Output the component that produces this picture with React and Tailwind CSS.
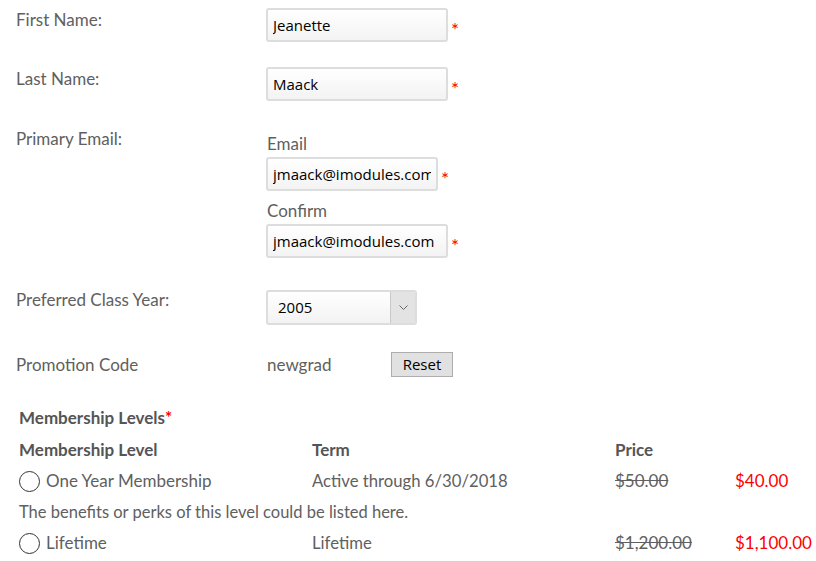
import { useState } from "react";

const inputCls =
  "h-[34px] rounded-[3px] border-2 border-[#dddddd] bg-gradient-to-b from-white to-[#f3f3f3] px-[5px] font-['Open_Sans',sans-serif] text-[15px] text-black outline-none";

const Req = () => (
  <span className="ml-[3px] mt-[12px] text-[19px] leading-none text-[#ff0000]">*</span>
);

const Label = ({ children }) => (
  <div className="w-[250px] shrink-0 leading-6">{children}</div>
);

export default function App() {
  const [first, setFirst] = useState("Jeanette");
  const [last, setLast] = useState("Maack");
  const [email, setEmail] = useState("jmaack@imodules.com");
  const [confirm, setConfirm] = useState("jmaack@imodules.com");
  const [level, setLevel] = useState("");

  return (
    <div className="min-h-screen bg-white pl-4 pt-[8px] font-['Lato',sans-serif] text-[17px] text-[#606060]">
      {/* First name */}
      <div className="flex">
        <Label>First Name:</Label>
        <div className="flex items-start">
          <input className={`${inputCls} w-[182px]`} value={first} onChange={(e) => setFirst(e.target.value)} />
          <Req />
        </div>
      </div>

      {/* Last name */}
      <div className="mt-[25px] flex">
        <Label>Last Name:</Label>
        <div className="flex items-start">
          <input className={`${inputCls} w-[182px]`} value={last} onChange={(e) => setLast(e.target.value)} />
          <Req />
        </div>
      </div>

      {/* Email */}
      <div className="mt-[26px] flex">
        <Label>Primary Email:</Label>
        <div className="pt-[5px]">
          <div className="pl-[1px] leading-6">Email</div>
          <div className="mt-[1px] flex items-start">
            <input className={`${inputCls} w-[172px]`} value={email} onChange={(e) => setEmail(e.target.value)} />
            <Req />
          </div>
          <div className="mt-[8px] pl-[1px] leading-6">Confirm</div>
          <div className="mt-[1px] flex items-start">
            <input className={`${inputCls} w-[182px]`} value={confirm} onChange={(e) => setConfirm(e.target.value)} />
            <Req />
          </div>
        </div>
      </div>

      {/* Class year */}
      <div className="mt-[30px] flex">
        <Label>Preferred Class Year:</Label>
        <div className="mt-[2px] flex h-[35px] w-[151px] overflow-hidden rounded-[3px] border-2 border-[#dddddd] bg-gradient-to-b from-white to-[#f3f3f3]">
          <div className="flex flex-1 items-center pl-[10px] font-['Open_Sans',sans-serif] text-[15px] text-black">2005</div>
          <div className="flex w-[25px] items-center justify-center border-l border-[#c8c8c8] bg-[#e3e3e3]">
            <svg width="9" height="5" viewBox="0 0 9 5">
              <path d="M0.5 0.5 L4.5 4.5 L8.5 0.5" fill="none" stroke="#666" strokeWidth="1" />
            </svg>
          </div>
        </div>
      </div>

      {/* Promotion code */}
      <div className="mt-[27px] flex items-center">
        <Label>Promotion Code</Label>
        <div className="w-[125px] pl-[1px] leading-6">newgrad</div>
        <button className="h-[25px] w-[62px] border border-[#adadad] bg-[#e1e1e1] font-['Open_Sans',sans-serif] text-[15px] leading-none text-black">
          Reset
        </button>
      </div>

      {/* Membership levels */}
      <div className="mt-[29px] pl-[3px]">
        <div className="font-bold leading-6 text-[#555555]">
          Membership Levels<span className="text-[#ff0000]">*</span>
        </div>
        <div className="mt-[8px] grid grid-cols-[293px_303px_120px_auto] font-bold leading-6 text-[#555555]">
          <div>Membership Level</div>
          <div>Term</div>
          <div>Price</div>
          <div></div>
        </div>
        {[
          { id: "one", name: "One Year Membership", term: "Active through 6/30/2018", was: "$50.00", now: "$40.00", desc: "The benefits or perks of this level could be listed here." },
          { id: "life", name: "Lifetime", term: "Lifetime", was: "$1,200.00", now: "$1,100.00" },
        ].map((r) => (
          <div key={r.id}>
            <div className="mt-[7px] grid grid-cols-[293px_303px_120px_auto] leading-6">
              <label className="flex items-center">
                <span
                  onClick={() => setLevel(r.id)}
                  className="mr-[6px] flex h-[21px] w-[21px] items-center justify-center rounded-full border border-[#333333] bg-white"
                >
                  {level === r.id && <span className="h-[10px] w-[10px] rounded-full bg-[#333333]" />}
                </span>
                {r.name}
              </label>
              <div className="text-[16.7px]">{r.term}</div>
              <div className="line-through">{r.was}</div>
              <div className="text-[#ff0000]">{r.now}</div>
            </div>
            {r.desc && <div className="mt-[7px] text-[16.5px] leading-6">{r.desc}</div>}
          </div>
        ))}
      </div>
    </div>
  );
}
